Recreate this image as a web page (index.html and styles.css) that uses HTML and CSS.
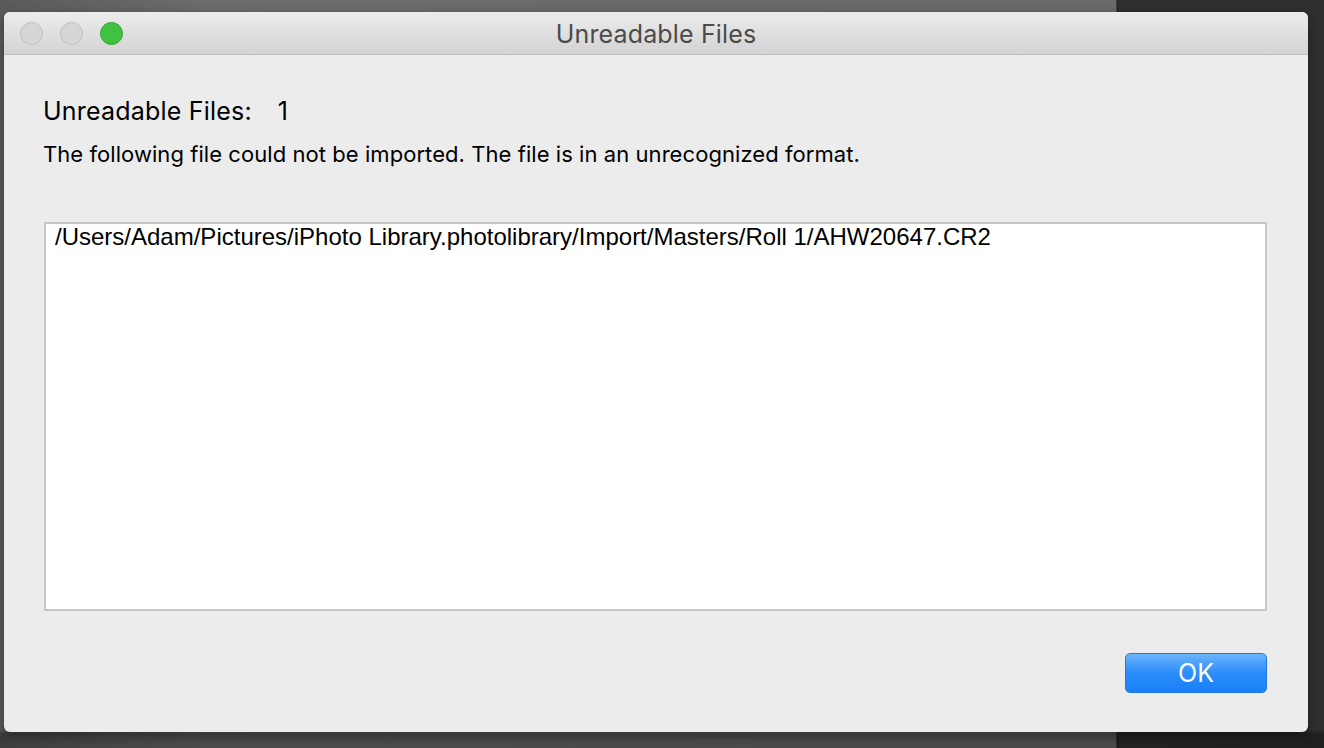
FILE: index.html
```html
<!DOCTYPE html>
<html lang="en">

<head>
    <meta charset="UTF-8">
    <meta name="viewport" content="width=device-width, initial-scale=1.0">
    <title>Unreadable Files</title>
    <link rel="stylesheet" href="styles.css">
</head>

<body>
    <div class="desk">
        <div class="window">
            <div class="titlebar">
                <div class="lights">
                    <span class="light"></span>
                    <span class="light"></span>
                    <span class="light green"></span>
                </div>
                <div class="title">Unreadable Files</div>
            </div>
            <div class="content">
                <div class="count">
                    <span>Unreadable Files:</span>
                    <span class="num">1</span>
                </div>
                <p class="msg">The following file could not be imported. The file is in an unrecognized format.</p>
                <div class="list">
                    <div class="item">/Users/Adam/Pictures/iPhoto Library.photolibrary/Import/Masters/Roll 1/AHW20647.CR2</div>
                </div>
                <div class="actions">
                    <button class="btn">OK</button>
                </div>
            </div>
        </div>
    </div>
</body>

</html>
```

FILE: styles.css
```css
html,
body {
    margin: 0;
    height: 748px;
    overflow: hidden;
}

body {
    background:
        linear-gradient(to bottom, transparent 0, transparent 730px, rgba(0, 0, 0, 0.35) 734px, rgba(0, 0, 0, 0.3) 100%),
        linear-gradient(to right, #5a5a5a 0, #6b6b6b 200px, #6a6a6a 1116px, #1f1f1f 1117px, #303030 1119px, #2f2f2f 100%);
    font-family: "Inter", "Liberation Sans", sans-serif;
}

.desk {
    padding: 12px 16px 16px 4px;
}

.window {
    width: 1304px;
    height: 720px;
    border-radius: 6px;
    background: #ececec;
    overflow: hidden;
    display: flex;
    flex-direction: column;
    box-shadow: 0 3px 10px rgba(0, 0, 0, 0.4);
}

.titlebar {
    height: 42px;
    flex: none;
    background: linear-gradient(#ececec, #d3d3d3);
    border-bottom: 1px solid #bdbdbd;
    display: flex;
    align-items: center;
    position: relative;
}

.lights {
    display: flex;
    gap: 17px;
    padding-left: 16px;
    position: absolute;
    left: 0;
    top: 10px;
}

.light {
    width: 21px;
    height: 21px;
    border-radius: 50%;
    background: #d6d6d6;
    border: 1px solid #c0c0c0;
}

.light.green {
    background: #3fc240;
    border-color: #2ea62f;
}

.title {
    flex: 1;
    text-align: center;
    font-size: 25px;
    color: #4b4b4b;
    letter-spacing: 0.15px;
    padding-top: 2px;
}

.content {
    flex: 1;
    padding: 0 41px 0 39px;
    display: flex;
    flex-direction: column;
    color: #000;
}

.count {
    margin-top: 41px;
    font-size: 25px;
    line-height: 30px;
    letter-spacing: 0.2px;
    display: flex;
    gap: 26px;
}

.msg {
    margin: 15px 0 0;
    font-size: 22px;
    line-height: 26px;
    letter-spacing: 0.06px;
}

.list {
    margin-top: 55px;
    margin-left: 1px;
    height: 385px;
    background: #fff;
    border: 2px solid #c6c6c6;
}

.item {
    font-family: "Liberation Sans", Arial, sans-serif;
    font-size: 24px;
    line-height: 26px;
    padding: 0 0 0 9px;
}

.actions {
    display: flex;
    justify-content: flex-end;
    margin-top: 42px;
}

.btn {
    width: 142px;
    height: 40px;
    border-radius: 5px;
    border: 1px solid #1f78e6;
    background: linear-gradient(#6db4fb, #2b8dfb 50%, #1a7ff8);
    color: #fff;
    font-family: "Inter", sans-serif;
    font-size: 25px;
    padding: 0;
}
```
